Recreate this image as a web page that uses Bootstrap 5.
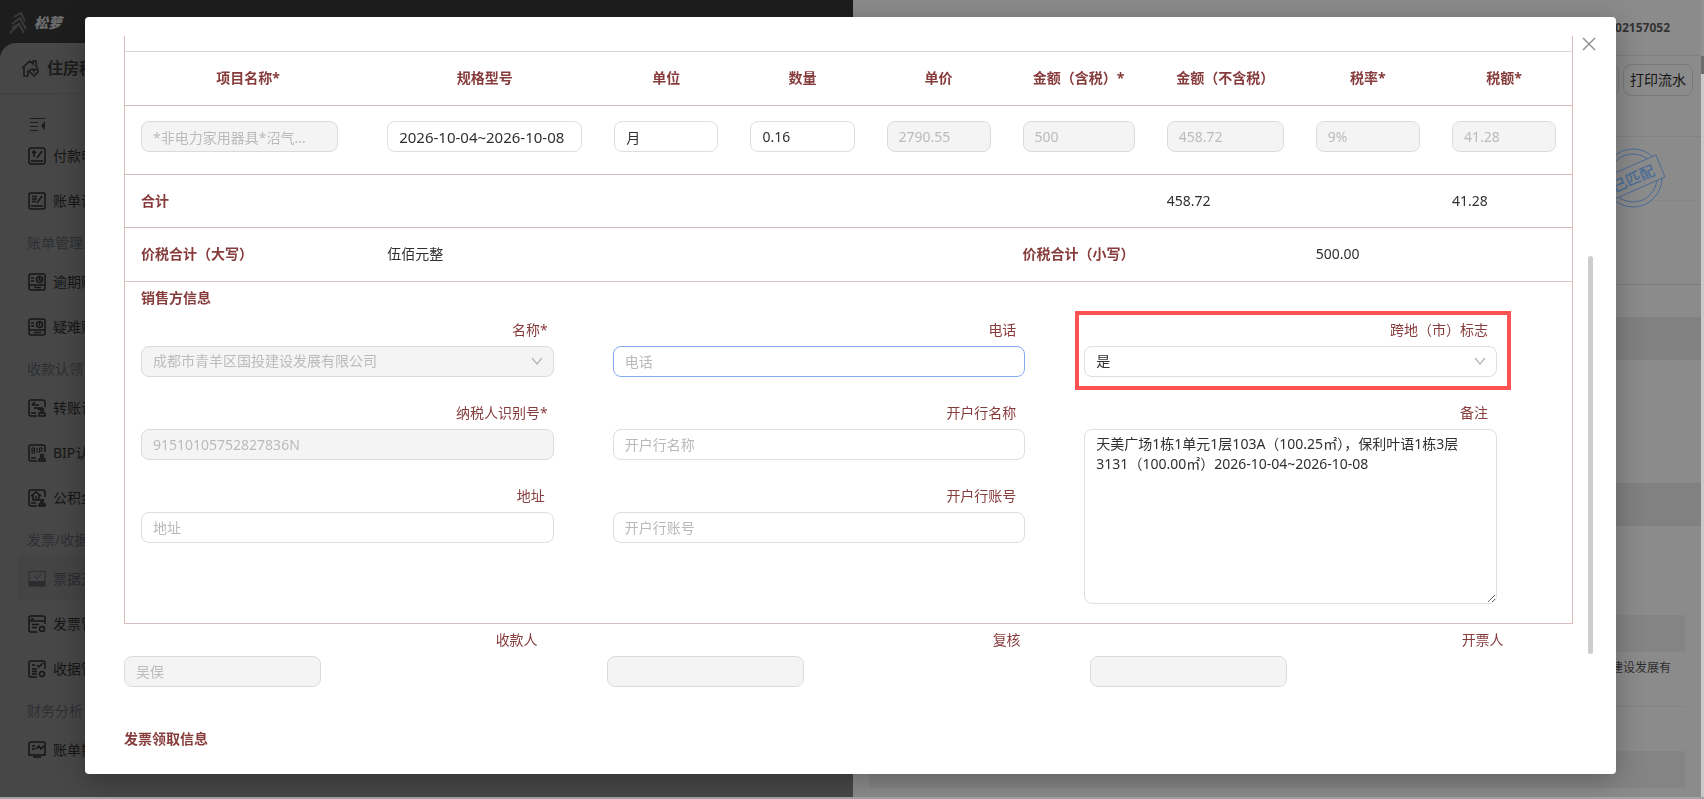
<!DOCTYPE html>
<html lang="zh-CN">
<head>
<meta charset="utf-8">
<meta name="viewport" content="width=device-width, initial-scale=1">
<title>发票信息</title>
<link href="https://cdn.jsdelivr.net/npm/bootstrap@5.3.0/dist/css/bootstrap.min.css" rel="stylesheet">
<style>
  body { font-family: "Noto Sans", "Noto Sans CJK SC", sans-serif; font-size: 14px; line-height: 22px; color: #303030; background: #1d1d1d; }
  svg { fill: none; stroke: currentColor; }

  /* dimmed page behind the dialog */
  .shell { border-bottom: 2px solid #a4a4a4; }
  .brand { height: 45px; padding-left: 8px; gap: 6px; color: #6d6d6d; font-style: italic; font-weight: 900; }
  .brand svg { color: #3a3a3a; stroke-width: 2; }
  .side { background: #474747; border-top-left-radius: 16px; margin-top: -2px; color: #1c1c1c; }
  .side-title { height: 51px; padding-left: 20px; gap: 7px; font-size: 16px; font-weight: 700; border-bottom: 1px solid #404040; }
  .side-title svg { stroke-width: 2; }
  .collapse-row { height: 39px; padding: 23px 0 0 30px; }
  .side-item { height: 45px; padding-left: 11px; margin-left: 17px; gap: 7px; color: #161616; text-decoration: none; border-radius: 8px 0 0 8px; }
  .side-item svg { stroke-width: 1.5; }
  .side-item.current { background: #444; color: #2b2c30; }
  .side-group { height: 36px; padding: 9px 0 0 27px; color: #2e2f33; }
  .drawer { width: 851px; background: #8b8b8b; }
  .drawer-head { height: 56px; padding-right: 31px; border-bottom: 1px solid #808080; font-size: 12px; font-weight: 700; color: #333; }
  .drawer-tools { height: 81px; padding: 8px 8px 0 0; border-bottom: 1px solid #838383; }
  .tool-btn { height: 32px; padding: 0 6px; border: 1px solid #7a7a7a; border-radius: 8px; background: none; color: #151515; }
  .stamp-row { height: 64px; border-bottom: 1px solid #868686; padding-right: 36px; }
  .stamp { color: #4a6b96; font-size: 15px; font-weight: 500; }
  .line-row { height: 84px; border-bottom: 1px solid #7d7d7d; margin-bottom: 32px; }
  .band { height: 43px; background: #818181; margin-bottom: 123px; }
  .band.last { margin-bottom: 89px; }
  .soft-box { height: 37px; margin: 0 16px; background: #848484; border-radius: 2px; }
  .drawer-note { height: 55px; margin: 0 16px 44px; padding: 5px 14px 0 0; font-size: 12px; color: #2e2e2e; border-bottom: 1px solid #838383; }
  .page-scroll { width: 3px; background: #c9c9c9; }
  .page-scroll .rail { height: 56px; background: #929292; }
  .page-scroll .thumb { height: 18px; background: #6c6c6c; }

  /* dialog */
  .overlay { padding: 17px 88px 25px 85px; }
  .dialog { background: #fff; border-radius: 4px; padding: 19px 43px 0 39px; box-shadow: 0 6px 28px rgba(0,0,0,.28); }
  .close-x { top: 17px; right: 17px; width: 20px; height: 20px; color: #8c8c8c; }
  .scroll-thumb { top: 239px; bottom: 120px; right: 23px; width: 5px; border-radius: 3px; background: #cdcdcd; }
  .invoice { border: solid #d9bcbc; border-width: 0 1px 1px; padding-top: 15px; }
  .wine { color: #873c3c; }
  .lines { table-layout: fixed; width: 100%; }
  .lines tr { border-top: 1px solid #d6b9b9; }
  .lines tr:first-child { height: 54px; }
  .lines thead tr { border-top-color: #dcd6d6; }
  .lines td { padding: 0 16px; }
  .lines th { text-align: center; white-space: nowrap; padding: 0 0 2px; }
  .lines tr.entry { height: 69px; }
  .lines tr.entry td { vertical-align: top; padding-top: 15px; }
  .lines tr.total { height: 53px; }
  .c-name { width: 246px; } .c-spec { width: 227px; } .c-std { width: 136px; } .c-gross { width: 144px; } .c-net { width: 149px; }
  .short-input { width: 197px; max-width: 100%; }

  .form-control, .form-select { height: 31px; min-height: 0; padding: 0 11px; font-size: 14px; line-height: 20px; border: 1px solid #dedede; border-radius: 8px; color: #303030; background-color: #fff; }
  .form-control::placeholder { color: #b9b9b9; }
  .form-control:disabled, .form-select:disabled { background-color: #f4f4f4; color: #bbb; opacity: 1; border-color: #dadada; }
  .form-select { background-image: url("data:image/svg+xml,%3Csvg xmlns='http://www.w3.org/2000/svg' viewBox='0 0 12 12'%3E%3Cpath d='M1 3l5 6 5-6' fill='none' stroke='%23b5b5b5' stroke-width='1.2'/%3E%3C/svg%3E"); background-size: 12px 12px; background-position: right 10px center; }
  .form-control.active-field { border-color: #86a9f3; }
  .form-control.period { font-size: 15px; }
  textarea.form-control.note { height: 175px; padding: 4px 11px; resize: both; }

  .seller { border-top: 1px solid #dcc6c6; padding: 5px 16px 18px; min-height: 342px; }
  .seller h2, .receive h2 { font-size: 14px; line-height: 22px; font-weight: 700; margin: 0; }
  .stack { padding-top: 10px; gap: 25px; }
  .third { flex: 1 1 0; min-width: 0; }
  .field { width: 87.5%; }
  .field > label { display: block; text-align: right; padding-right: 9px; margin-bottom: 5px; color: #873c3c; }
  .field > label.must { padding-right: 6px; }
  .highlight { top: -8px; left: -9px; right: -14px; bottom: -13px; border: 4px solid #ff5252; pointer-events: none; }
  .signers { padding-top: 5px; }
  .receive { padding-top: 41px; }
</style>
</head>
<body>
<div class="shell vh-100 d-flex overflow-hidden">
  <div class="flex-grow-1 d-flex flex-column">
    <header class="brand d-flex align-items-center">
      <svg width="20" height="24" viewBox="0 0 20 24"><path d="M6 6l7-4 4 8M4 13l8-6 6 11M2 22l9-9 5 9M4 17l8-5"/></svg>
      <span>松萝</span>
    </header>
    <nav class="side flex-grow-1">
      <div class="side-title d-flex align-items-center">
        <svg width="20" height="20" viewBox="0 0 20 20"><path stroke-width="1.6" d="M2 10l8-7 3 3V3h3v5l2 2M4 9v9h4M8 18v-5h2M14 18l-4-4c-1-3 3-4 4-1 1-3 5-2 4 1z"/></svg>
        <span>住房租</span>
      </div>
      <div class="collapse-row"><svg class="d-block" width="16" height="15" viewBox="0 0 16 15"><path d="M0 1.5h15M0 5.5h8M0 9.5h8M0 13.5h8"/><path d="M15 4v9l-4-4z" fill="currentColor" stroke="none"/></svg></div>
      <a href="#" class="side-item d-flex align-items-center"><svg width="18" height="18" viewBox="0 0 18 18"><rect x="1" y="1" width="16" height="16" rx="2"/><path d="M3 14h12M6 10V4M4 6l2-2 2 2M9 11l5-7"/></svg>付款申</a>
      <a href="#" class="side-item d-flex align-items-center"><svg width="18" height="18" viewBox="0 0 18 18"><rect x="1" y="1" width="16" height="16" rx="2"/><path d="M3 14h12M4 4.500h5M4 7h5M4 9.500h4M9 11l5-7"/></svg>账单调</a>
      <div class="side-group">账单管理</div>
      <a href="#" class="side-item d-flex align-items-center"><svg width="18" height="18" viewBox="0 0 18 18"><rect x="1" y="1" width="16" height="16" rx="2"/><path d="M1 12h16M6 14.500h7M3 5h3M3 8h3"/><circle cx="11.500" cy="6.500" r="3"/><path d="M11.500 4v3h2"/></svg>逾期账</a>
      <a href="#" class="side-item d-flex align-items-center"><svg width="18" height="18" viewBox="0 0 18 18"><rect x="1" y="1" width="16" height="16" rx="2"/><path d="M1 12h16M6 14.500h7M3 5h3M3 8h3"/><circle cx="11.500" cy="6.500" r="3"/><path d="M11.500 4v4"/></svg>疑难账</a>
      <div class="side-group">收款认领</div>
      <a href="#" class="side-item d-flex align-items-center"><svg width="18" height="18" viewBox="0 0 18 18"><path d="M9 17H3q-2 0-2-2V3q0-2 2-2h12q2 0 2 2v5M3 14h5M4 6h7M7 3L4 6M6 9h7l-3 2"/><circle cx="14" cy="11" r="1.500"/><path d="M11 17v-3h6v3z"/></svg>转账认</a>
      <a href="#" class="side-item d-flex align-items-center"><svg width="18" height="18" viewBox="0 0 18 18"><path d="M9 17H3q-2 0-2-2V3q0-2 2-2h12q2 0 2 2v5M3 14h5"/><path stroke-width="1" d="M4 4v5h2.500V4zM4 6.500h2M9 4v5M11.500 9V4H14v3h-2"/><circle cx="14" cy="12" r="1.500"/><path d="M11 17v-2h6v2z"/></svg>BIP认</a>
      <a href="#" class="side-item d-flex align-items-center"><svg width="18" height="18" viewBox="0 0 18 18"><path d="M9 17H3q-2 0-2-2V3q0-2 2-2h12q2 0 2 2v5M3 14h5M3 7l5-4 5 4M5 6v5h6V6M8 7v3"/><circle cx="14" cy="12" r="1.500"/><path d="M11 17v-2h6v2z"/></svg>公积金</a>
      <div class="side-group">发票/收据</div>
      <a href="#" class="side-item current d-flex align-items-center"><svg width="18" height="18" viewBox="0 0 18 18"><path stroke-width="1" d="M1 1l2 1 2-1 2 1 2-1 2 1 2-1 2 1 2-1v15H1zM6 6l3 3 4-5"/><path d="M1 11h16v6l-2-1-2 1-2-1-2 1-2-1-2 1-2-1-2 1z" fill="currentColor" stroke="none"/></svg>票据开</a>
      <a href="#" class="side-item d-flex align-items-center"><svg width="18" height="18" viewBox="0 0 18 18"><path d="M9 17H3q-2 0-2-2V3q0-2 2-2h12q2 0 2 2v6M1 6h16M3 4h3M4 9.500h7M4 12.500h5"/><circle cx="14" cy="14" r="2.500"/></svg>发票管</a>
      <a href="#" class="side-item d-flex align-items-center"><svg width="18" height="18" viewBox="0 0 18 18"><path d="M9 17H3q-2 0-2-2V3q0-2 2-2h12q2 0 2 2v6M4 5h3M9 5l2 2 4-4M4 9h5M4 11.500h5M4 14h5"/><circle cx="14" cy="14" r="2.500"/></svg>收据管</a>
      <div class="side-group">财务分析</div>
      <a href="#" class="side-item d-flex align-items-center"><svg width="18" height="18" viewBox="0 0 18 18"><path d="M1 14V3q0-2 2-2h12q2 0 2 2v11zM5 16h8M4 5h3M4 8h3M8 8l3-3 2 3 3-3"/></svg>账单数</a>
    </nav>
  </div>
  <aside class="drawer d-flex">
    <div class="flex-grow-1">
      <div class="drawer-head d-flex align-items-center justify-content-end">02157052</div>
      <div class="drawer-tools d-flex justify-content-end align-items-start gap-1">
        <button type="button" class="tool-btn">流水</button>
        <button type="button" class="tool-btn">打印流水</button>
      </div>
      <div class="stamp-row d-flex justify-content-end align-items-start">
        <svg class="stamp overflow-visible flex-shrink-0" width="66" height="82" viewBox="0 0 66 82"><circle cx="34" cy="41" r="29"/><circle cx="34" cy="41" r="24"/><path d="M2 42L57 18l9 22-55 24z" fill="#8b8b8b"/><text x="34" y="47" text-anchor="middle" transform="rotate(-24 34 41)" fill="currentColor" stroke="none">已匹配</text></svg>
      </div>
      <div class="line-row"></div>
      <div class="band"></div>
      <div class="band last"></div>
      <div class="soft-box"></div>
      <div class="drawer-note text-end">建设发展有</div>
      <div class="soft-box"></div>
    </div>
    <div class="page-scroll"><div class="rail"></div><div class="thumb"></div></div>
  </aside>
</div>

<div class="overlay position-fixed top-0 start-0 w-100 h-100 d-flex">
  <section class="dialog position-relative flex-grow-1" role="dialog" aria-modal="true" aria-label="发票信息">
    <button type="button" class="close-x position-absolute border-0 bg-transparent p-0 d-flex align-items-center justify-content-center" aria-label="关闭"><svg width="14" height="14" viewBox="0 0 14 14"><path d="M1 1l12 12M13 1L1 13" stroke-width="1.4"/></svg></button>
    <div class="scroll-thumb position-absolute"></div>

    <div class="invoice">
      <table class="lines">
        <colgroup><col class="c-name"><col class="c-spec"><col class="c-std"><col class="c-std"><col class="c-std"><col class="c-gross"><col class="c-net"><col class="c-std"><col class="c-std"></colgroup>
        <thead>
          <tr class="wine"><th>项目名称*</th><th>规格型号</th><th>单位</th><th>数量</th><th>单价</th><th>金额（含税）*</th><th>金额（不含税）</th><th>税率*</th><th>税额*</th></tr>
        </thead>
        <tbody>
          <tr class="entry">
            <td><input class="form-control short-input" aria-label="项目名称" value="*非电力家用器具*沼气..." disabled></td>
            <td><input class="form-control period" aria-label="规格型号" value="2026-10-04~2026-10-08"></td>
            <td><input class="form-control" aria-label="单位" value="月"></td>
            <td><input class="form-control" aria-label="数量" value="0.16"></td>
            <td><input class="form-control" aria-label="单价" value="2790.55" disabled></td>
            <td><input class="form-control" aria-label="金额（含税）" value="500" disabled></td>
            <td><input class="form-control" aria-label="金额（不含税）" value="458.72" disabled></td>
            <td><input class="form-control" aria-label="税率" value="9%" disabled></td>
            <td><input class="form-control" aria-label="税额" value="41.28" disabled></td>
          </tr>
          <tr class="total"><td class="wine fw-bold" colspan="6">合计</td><td colspan="2">458.72</td><td>41.28</td></tr>
          <tr class="total"><td class="wine fw-bold">价税合计（大写）</td><td colspan="4">伍佰元整</td><td class="wine fw-bold" colspan="2">价税合计（小写）</td><td colspan="2">500.00</td></tr>
        </tbody>
      </table>

      <div class="seller">
        <h2 class="wine">销售方信息</h2>
        <div class="d-flex">
          <div class="third stack d-flex flex-column">
            <div class="field"><label class="must" for="sName">名称*</label><select class="form-select" id="sName" disabled><option>成都市青羊区国投建设发展有限公司</option></select></div>
            <div class="field"><label class="must" for="sTax">纳税人识别号*</label><input class="form-control" id="sTax" value="91510105752827836N" disabled></div>
            <div class="field"><label for="sAddr">地址</label><input class="form-control" id="sAddr" placeholder="地址"></div>
          </div>
          <div class="third stack d-flex flex-column">
            <div class="field"><label for="sTel">电话</label><input class="form-control active-field" id="sTel" placeholder="电话"></div>
            <div class="field"><label for="sBank">开户行名称</label><input class="form-control" id="sBank" placeholder="开户行名称"></div>
            <div class="field"><label for="sAcc">开户行账号</label><input class="form-control" id="sAcc" placeholder="开户行账号"></div>
          </div>
          <div class="third stack d-flex flex-column">
            <div class="field position-relative"><label for="sCross">跨地（市）标志</label><select class="form-select" id="sCross"><option>是</option><option>否</option></select><div class="highlight position-absolute"></div></div>
            <div class="field"><label for="sNote">备注</label><textarea class="form-control note" id="sNote">天美广场1栋1单元1层103A（100.25㎡），保利叶语1栋3层3131（100.00㎡）2026-10-04~2026-10-08</textarea></div>
          </div>
        </div>
      </div>
    </div>

    <div class="signers d-flex">
      <div class="third"><div class="field"><label for="pPayee">收款人</label><input class="form-control short-input" id="pPayee" value="吴俣" disabled></div></div>
      <div class="third"><div class="field"><label for="pCheck">复核</label><input class="form-control short-input" id="pCheck" disabled></div></div>
      <div class="third"><div class="field"><label for="pDrawer">开票人</label><input class="form-control short-input" id="pDrawer" disabled></div></div>
    </div>
    <div class="receive"><h2 class="wine">发票领取信息</h2></div>
  </section>
</div>
<script src="https://cdn.jsdelivr.net/npm/bootstrap@5.3.0/dist/js/bootstrap.bundle.min.js"></script>
</body>
</html>
